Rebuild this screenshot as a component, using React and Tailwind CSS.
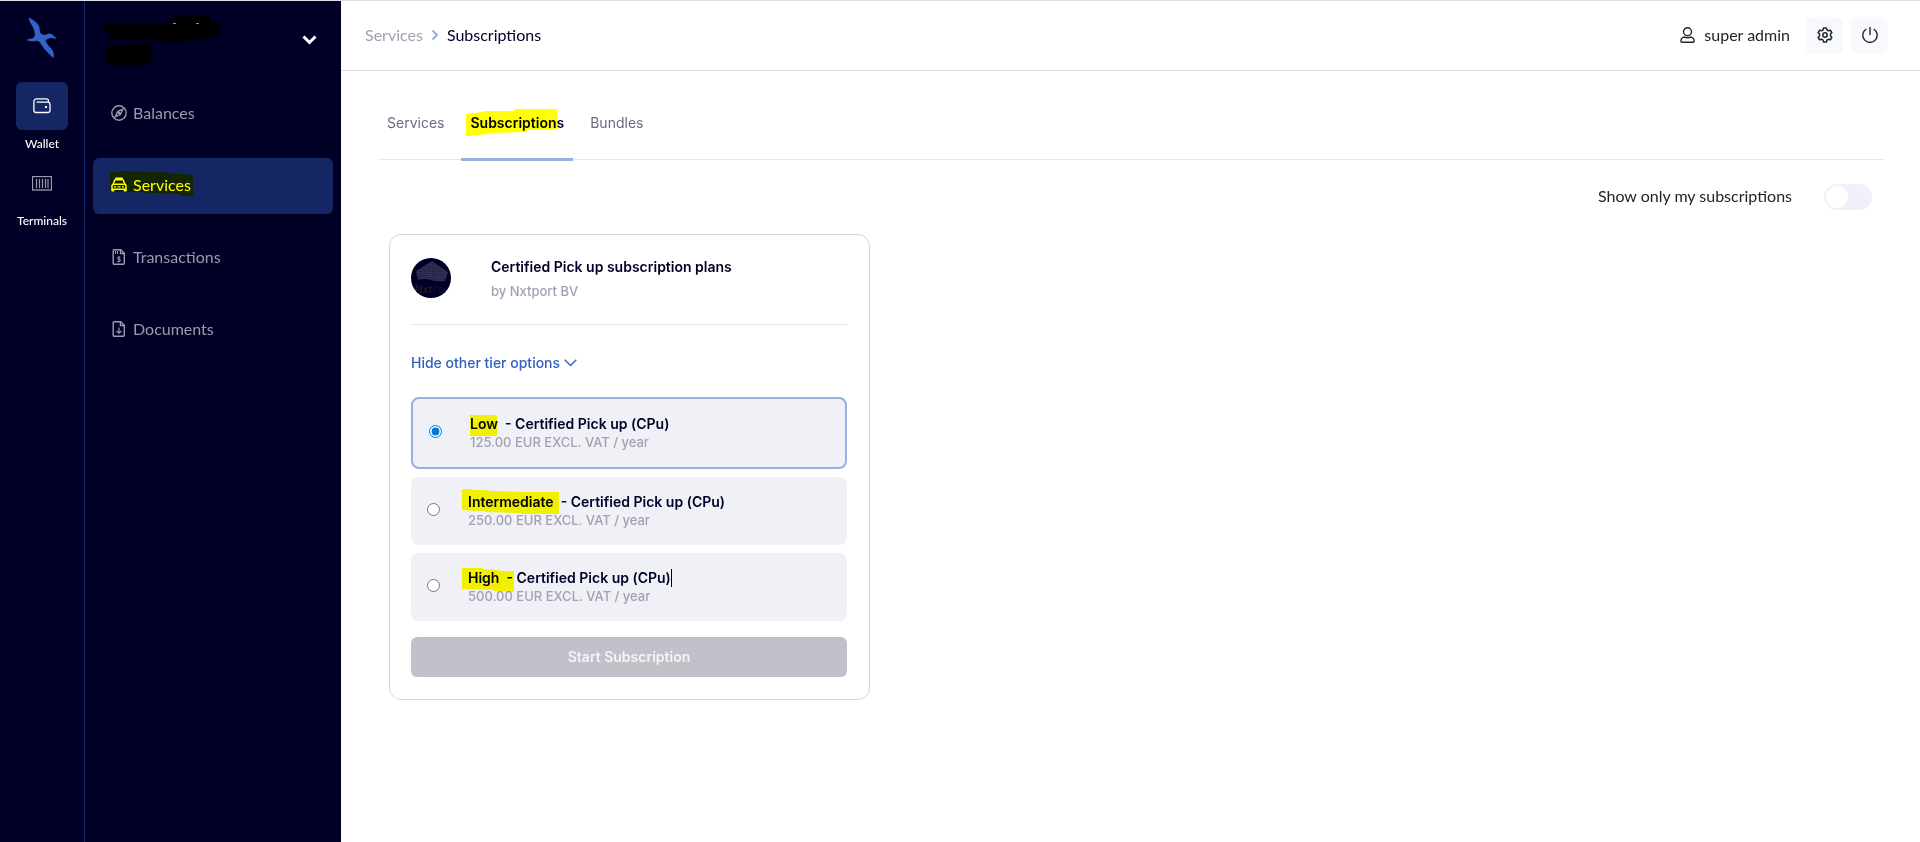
import React, { useState } from 'react';

const navItems = [
    { key: 'balances', name: 'Balances' },
    { key: 'services', name: 'Services' },
    { key: 'transactions', name: 'Transactions' },
    { key: 'documents', name: 'Documents' }
];

const plans = [
    { key: 'low', name: 'Low', price: '125.00' },
    { key: 'intermediate', name: 'Intermediate', price: '250.00' },
    { key: 'high', name: 'High', price: '500.00' }
];

const BirdLogo = () => (
    <svg width="30" height="42" viewBox="0 0 30 42" fill="#3263c4" aria-hidden="true">
        <path d="M2 0.5C7 3.5 11.500 6 12.500 10.500C12.900 13 12.500 15.500 14 16.500C16 18.500 18.500 18 20.500 17C23 15.500 26 17.500 29 21C29.300 22 28 22.200 26.500 21.200C23 20.300 20 21.500 18.500 24C20.500 29 26 31.500 26.800 37C27 39.500 26.500 41 26 41C22.500 37 17 32.500 13.500 26.500C12.500 24.500 11 23.500 9 24C6 24.500 2 24.200 0.500 23.500C0 22.500 0.500 22 2 22C5.500 21.800 7.500 20.500 7.800 18.500C8 14 6.500 10.500 4 7C2.500 4.500 1.500 2 2 0.500Z" />
    </svg>
);

const WalletIcon = () => (
    <svg width="18" height="16" viewBox="0 0 18 16" fill="none" stroke="#fff" strokeWidth="1.3" aria-hidden="true">
        <path d="M15.500 4V3A2.200 2.200 0 0 0 13.300 0.900H3.500A2.600 2.600 0 0 0 0.900 3.500V12.200A2.300 2.300 0 0 0 3.200 14.500H14.800A2.200 2.200 0 0 0 17 12.300V6.300A2.200 2.200 0 0 0 14.800 4.100H3.500" />
        <rect x="12" y="8" width="2" height="2" fill="#fff" stroke="none" />
    </svg>
);

const ContainerIcon = () => (
    <svg width="20" height="15" viewBox="0 0 20 15" fill="none" stroke="#9b9aad" aria-hidden="true">
        <rect x="0.5" y="0.5" width="19" height="13.5" strokeWidth="1.300" />
        <path d="M4.500 3V12M7.500 3V12M10.500 3V12M13.500 3V12M16 3V12" strokeWidth="1.200" />
    </svg>
);

const FileIcon = ({ children }) => (
    <svg width="16" height="16" viewBox="0 0 16 16" fill="none" stroke="currentColor" strokeWidth="1.4" aria-hidden="true">
        <path d="M3.200 0.700H9.800L13.300 4.200V14.300A1 1 0 0 1 12.300 15.300H3.200A1 1 0 0 1 2.200 14.300V1.700A1 1 0 0 1 3.200 0.700Z" />
        <path d="M9.500 0.700V4.500H13.300" />
        {children}
    </svg>
);

const NavIcon = ({ name }) => {
    switch (name) {
        case 'balances':
            return (
                <svg width="16" height="16" viewBox="0 0 16 16" fill="none" stroke="currentColor" strokeWidth="1.4" aria-hidden="true">
                    <circle cx="8" cy="8" r="7.200" />
                    <path d="M11.800 4.200L9.400 9.400L4.200 11.800L6.600 6.600Z" />
                    <circle cx="8" cy="8" r="0.600" />
                </svg>
            );
        case 'services':
            return (
                <svg width="16" height="16" viewBox="0 0 16 16" fill="none" stroke="currentColor" strokeWidth="1.5" aria-hidden="true">
                    <path d="M5 2.500V1.200H11V2.500" />
                    <path d="M2.200 7.300L3.500 3.600A1.300 1.300 0 0 1 4.700 2.700H11.300A1.300 1.300 0 0 1 12.500 3.600L13.800 7.300" />
                    <path d="M1 14V8.800A1.500 1.500 0 0 1 2.500 7.300H13.500A1.500 1.500 0 0 1 15 8.800V14M1 12.200H15" />
                    <path d="M2 12V14.500M14 12V14.500" strokeWidth="2.500" />
                    <path d="M3 9.800H5M6.500 9.800H9.500M11 9.800H13" strokeWidth="1.300" />
                </svg>
            );
        case 'transactions':
            return (
                <FileIcon>
                    <path d="M4.500 2V5M6.500 2V5" strokeWidth="1" />
                    <path d="M9.500 8.200H7.600A1 1 0 0 0 7.600 10.300H8.400A1 1 0 0 1 8.400 12.400H6.300M8 7.200V13.400" strokeWidth="1" />
                </FileIcon>
            );
        default:
            return (
                <FileIcon>
                    <path d="M8 6.500V12M5.500 10L8 12.200L10.500 10" strokeWidth="1.200" />
                </FileIcon>
            );
    }
};

const UserIcon = () => (
    <svg width="16" height="16" viewBox="0 0 16 16" fill="none" stroke="currentColor" strokeWidth="1.400" aria-hidden="true">
        <circle cx="7.500" cy="4.800" r="4" />
        <path d="M4.500 10C2.500 10 0.900 12 0.900 14.200A1 1 0 0 0 1.900 15.200H13.100A1 1 0 0 0 14.100 14.200C14.100 12 12.500 10 10.500 10C9.500 11 5.500 11 4.500 10Z" />
    </svg>
);

const GearIcon = () => (
    <svg width="16" height="16" viewBox="0 0 16 16" fill="none" stroke="currentColor" strokeWidth="1.500" strokeLinejoin="round" aria-hidden="true">
        <path d="M6.600 0.900H9.400L9.900 2.900L11.500 3.800L13.400 3.200L14.900 5.600L13.500 7.100V8.900L14.900 10.400L13.400 12.800L11.500 12.200L9.900 13.100L9.400 15.100H6.600L6.100 13.100L4.500 12.200L2.600 12.800L1.100 10.400L2.500 8.900V7.100L1.100 5.600L2.600 3.200L4.500 3.800L6.100 2.900Z" />
        <circle cx="8" cy="8" r="2.200" />
    </svg>
);

const PowerIcon = () => (
    <svg width="16" height="16" viewBox="0 0 16 16" fill="none" stroke="currentColor" strokeWidth="1.400" aria-hidden="true">
        <path d="M8 0V8" />
        <path d="M4.300 2A7.200 7.200 0 1 0 11.700 2" />
    </svg>
);

// marker strokes drawn over the highlighted words
const marks = {
    nav: { box: 'absolute -left-6 -top-1 h-7 w-24', d: 'M1 3L14 2L50 3L84 6V27H70V25L24 23H1Z' },
    tab: { box: 'absolute -left-1 -top-1 h-7 w-24', d: 'M0 5L17 3V2L48 2V0H91V21L61 21V23L25 24L14 26L0 27Z' },
    low: { box: 'absolute left-0 top-0 h-6 w-8', d: 'M0 0H27V21H0Z' },
    intermediate: { box: 'absolute -left-1.5 -top-1 h-7 w-26', d: 'M0 0H9V1H22L31 2L67 3H97V25H59V24L23 23V22H14L0 21Z' },
    high: { box: 'absolute -left-1.5 -top-px h-7 w-16', d: 'M0 0H21V1L35 2L40 3H52V24L32 23V22L0 21Z' }
};

const Mark = ({ name }) => (
    <svg className={`${marks[name].box} pointer-events-none overflow-visible mix-blend-multiply`} aria-hidden="true">
        <path d={marks[name].d} fill="#ffff00" />
    </svg>
);

const Sidebar = () => (
    <aside className="flex shrink-0 bg-[#000026]">
        <div className="flex w-[85px] flex-col items-center border-r border-[#142664] pt-4">
            <BirdLogo />
            <a href="#wallet" className="mt-[23px] flex flex-col items-center text-xs font-medium text-white">
                <span className="flex h-12 w-[52px] items-center justify-center rounded-md bg-[#142664]">
                    <WalletIcon />
                </span>
                <span className="mt-1.5">Wallet</span>
            </a>
            <a href="#terminals" className="mt-[7px] flex flex-col items-center text-xs font-medium text-white">
                <span className="flex h-12 items-center justify-center">
                    <ContainerIcon />
                </span>
                <span className="mt-1.5">Terminals</span>
            </a>
        </div>

        <div className="w-64 px-2">
            <div className="flex h-[85px] items-start justify-between pl-[11px] pr-4 pt-[13px]">
                <svg width="118" height="54" viewBox="0 0 118 54" aria-hidden="true">
                    <path d="M0 9H66V5L74 3L90 1H106V8H116V16L113 23L98 25L70 28L40 26L5 26V18H0Z" fill="#000" />
                    <path d="M2 33L22 30H45L47 34V48L42 51L36 52H10L2 51Z" fill="#000" />
                    <path d="M69 9.500H72M92 9.500H95" stroke="#8c8c99" />
                </svg>
                <button type="button" aria-label="Switch account" className="mt-5">
                    <svg width="15" height="12" viewBox="0 0 15 12" fill="none" stroke="#fff" strokeWidth="3" aria-hidden="true">
                        <path d="M1.500 2.500L7.500 8.500L13.500 2.500" />
                    </svg>
                </button>
            </div>
            <nav className="flex flex-col gap-4">
                {navItems.map(item => (
                    <a
                        key={item.key}
                        href={`#${item.key}`}
                        className={`flex h-14 items-center gap-1.5 rounded-md px-[18px] pb-0.5 ${item.key === 'services'
                            ? 'bg-[#142664] text-white'
                            : 'text-[#9b9aad]'
                            }`}
                    >
                        <NavIcon name={item.key} />
                        <span className="relative">
                            {item.name}
                            {item.key === 'services' && <Mark name="nav" />}
                        </span>
                    </a>
                ))}
            </nav>
        </div>
    </aside>
);

const Header = () => (
    <header className="flex h-[70px] items-center justify-between border-b border-[#dedede] pl-6 pr-8">
        <div className="flex items-center pb-0.5">
            <a href="#services" className="text-[#a3a1b0]">Services</a>
            <svg className="mx-2" width="8" height="12" viewBox="0 0 8 12" fill="none" stroke="#9aaee0" strokeWidth="2" aria-hidden="true">
                <path d="M1.500 1.500L6 6L1.500 10.500" />
            </svg>
            <span className="text-[#000026]">Subscriptions</span>
        </div>
        <div className="flex items-center gap-2 text-[#212529]">
            <span className="mr-2 flex items-center gap-2 pb-0.5">
                <UserIcon />
                super admin
            </span>
            <button type="button" aria-label="Settings" className="flex size-[37px] items-center justify-center rounded-md bg-[#f8f9fc] pb-0.5">
                <GearIcon />
            </button>
            <button type="button" aria-label="Log out" className="flex size-[37px] items-center justify-center rounded-md bg-[#f8f9fc] pb-0.5">
                <PowerIcon />
            </button>
        </div>
    </header>
);

const PlanOption = ({ plan, checked, onSelect }) => (
    <label
        className={`flex items-center gap-7 rounded-lg bg-[#f0f0f7] px-4 py-4 ${checked ? 'border-2 border-[#9aaee0]' : ''}`}
    >
        <input
            type="radio"
            name="plan"
            className="mb-1 size-[13px] accent-[#0078d7]"
            checked={checked}
            onChange={onSelect}
        />
        <span className="flex flex-col">
            <span className="flex text-sm leading-[18px] font-semibold text-[#000026]">
                <span className="relative whitespace-pre">
                    {plan.name + '  '}
                    <Mark name={plan.key} />
                </span>
                <span>- Certified Pick up (CPu)</span>
                {plan.key === 'high' && <span className="w-px bg-black" />}
            </span>
            <span className="text-[13px] leading-[18px] font-medium text-[#a3a1b0]">
                {plan.price} EUR EXCL. VAT / year
            </span>
        </span>
    </label>
);

const SubscriptionCard = () => {
    const [selected, setSelected] = useState('low');

    return (
        <section className="w-[481px] max-w-full rounded-xl border border-[#d6d6d9] pb-[22px] pl-[21px] pr-[22px] pt-5">
            <div className="flex items-start gap-10 border-b border-[#e3e4ea] pb-[21px]">
                <svg className="mt-[3px]" width="40" height="40" viewBox="0 0 40 40" role="img" aria-label="Nxtport">
                    <defs>
                        <clipPath id="avatar"><circle cx="20" cy="20" r="20" /></clipPath>
                        <pattern id="mesh" width="2" height="2" patternUnits="userSpaceOnUse">
                            <rect width="2" height="2" fill="#25264a" />
                            <rect width="1" height="1" fill="#3a3a58" />
                        </pattern>
                    </defs>
                    <circle cx="20" cy="20" r="20" fill="#000026" />
                    <path d="M21 3L37 14L34 23Q26 24 20 22T7 22L5 13Z" fill="url(#mesh)" />
                    <text x="4" y="35" fontSize="10" fontWeight="700" fill="#1a1b20" clipPath="url(#avatar)">
                        Nxt<tspan fontWeight="400" fill="#10112e">Port</tspan>
                    </text>
                </svg>
                <div>
                    <h2 className="text-sm leading-6 font-semibold text-[#000026]">Certified Pick up subscription plans</h2>
                    <p className="text-[13px] leading-6 font-medium text-[#a3a1b0]">by Nxtport BV</p>
                </div>
            </div>

            <button type="button" className="mt-7 flex items-center gap-1 text-sm font-medium text-[#3060c0]">
                Hide other tier options
                <svg width="13" height="8" viewBox="0 0 13 8" fill="none" stroke="currentColor" strokeWidth="1.400" aria-hidden="true">
                    <path d="M0.700 0.800L6.500 6.600L12.300 0.800" />
                </svg>
            </button>

            <div className="mt-6 flex flex-col gap-2">
                {plans.map(plan => (
                    <PlanOption
                        key={plan.key}
                        plan={plan}
                        checked={selected === plan.key}
                        onSelect={() => setSelected(plan.key)}
                    />
                ))}
            </div>

            <button type="button" className="mt-4 h-10 w-full rounded-md bg-[#c1c1ca] text-sm font-semibold text-[#f5f5f8]">
                Start Subscription
            </button>
        </section>
    );
};

const App = () => {
    const [onlyMine, setOnlyMine] = useState(false);

    return (
        <div className="flex min-h-screen border-t border-[#dedede] bg-white font-[Lato,sans-serif] text-base">
            <Sidebar />
            <div className="min-w-0 flex-1">
                <Header />
                <main className="pl-[37px] pr-9">
                    <div className="flex h-[89px] items-stretch gap-2 border-b border-[#e8e8f4] pt-4 font-[Inter,sans-serif] text-sm text-[#6b6a80]">
                        <a href="#tab-services" className="flex items-center px-[9px]">Services</a>
                        <a href="#tab-subscriptions" className="-mb-0.5 flex items-center border-b-3 border-[#9aaee0] px-[9px] font-semibold text-[#000026]">
                            <span className="relative">
                                Subscriptions
                                <Mark name="tab" />
                            </span>
                        </a>
                        <a href="#tab-bundles" className="flex items-center px-[9px]">Bundles</a>
                    </div>

                    <label className="mt-6 flex items-center justify-end gap-8 pr-3 text-[#212529]">
                        <span className="pb-0.5">Show only my subscriptions</span>
                        <input
                            type="checkbox"
                            role="switch"
                            checked={onlyMine}
                            onChange={() => setOnlyMine(!onlyMine)}
                            className="h-[26px] w-12 appearance-none rounded-full bg-[#f0f0fa] p-0.5 before:block before:size-[22px] before:rounded-full before:bg-white checked:bg-[#9aaee0] checked:before:ml-auto"
                        />
                    </label>

                    <div className="px-[11px] pt-6 pb-8 font-[Inter,sans-serif]">
                        <SubscriptionCard />
                    </div>
                </main>
            </div>
        </div>
    );
};

export default App;
